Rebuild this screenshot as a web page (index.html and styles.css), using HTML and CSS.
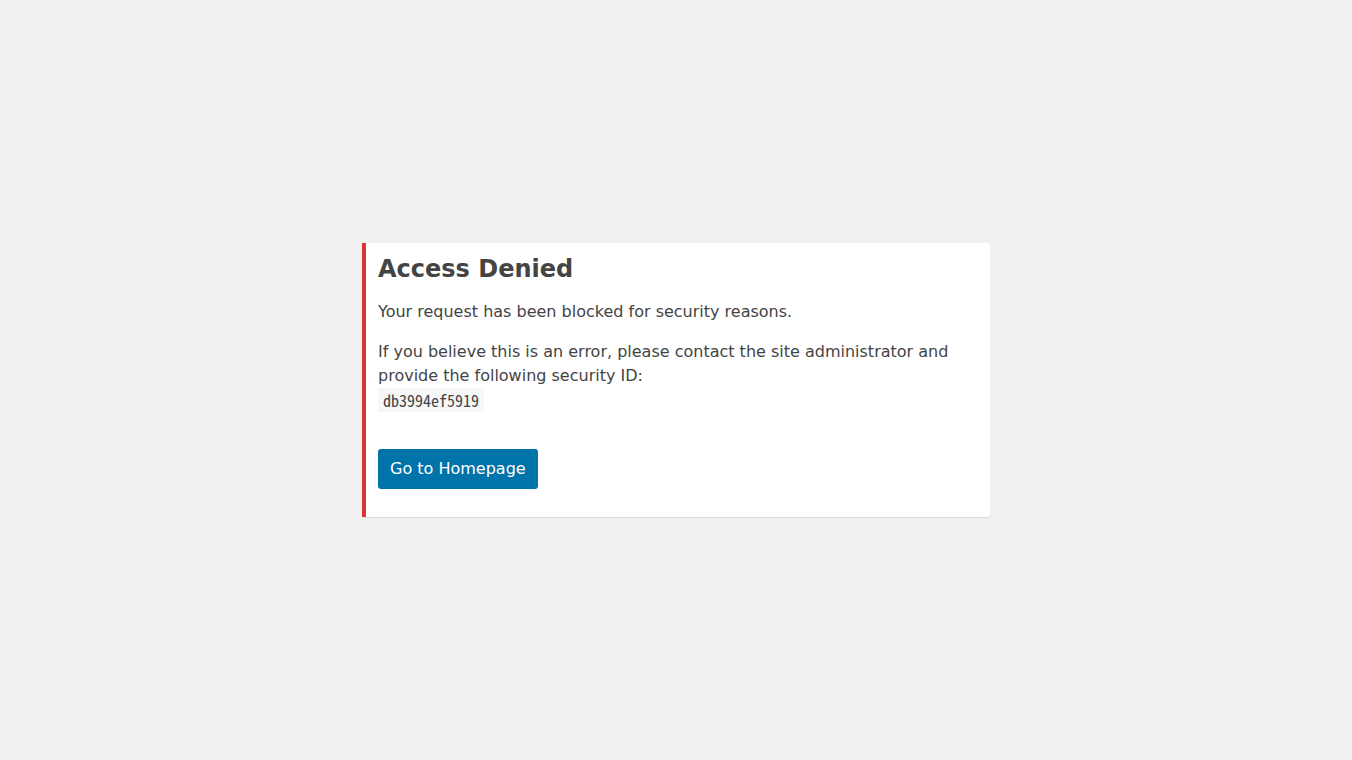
FILE: index.html
```html
<!DOCTYPE html>
<html lang="en">
<head>
<meta charset="utf-8">
<title>Access Denied</title>
<link rel="stylesheet" href="styles.css">
</head>
<body>
<main class="page">
  <section class="notice">
    <h1 class="notice-title">Access Denied</h1>
    <p class="notice-text">Your request has been blocked for security reasons.</p>
    <p class="notice-text">If you believe this is an error, please contact the site administrator and provide the following security ID:<br><code class="security-id">db3994ef5919</code></p>
    <div class="actions">
      <a class="button" href="#">Go to Homepage</a>
    </div>
  </section>
</main>
</body>
</html>
```

FILE: styles.css
```css
html, body {
  margin: 0;
  padding: 0;
}
body {
  background: #f1f1f1;
  color: #444;
  font-family: "DejaVu Sans", sans-serif;
  font-size: 16px;
  line-height: 24px;
}
.page {
  min-height: 100vh;
  display: flex;
  align-items: center;
  justify-content: center;
}
.notice {
  width: 600px;
  background: #fff;
  border-left: 4px solid #d63638;
  border-radius: 0 3px 3px 0;
  box-shadow: 0 1px 1px rgba(0, 0, 0, 0.1);
  padding: 11px 12px 28px;
}
.notice-title {
  margin: 0 0 15px;
  font-size: 24px;
  line-height: 31px;
  font-weight: bold;
  color: #444;
}
.notice-text {
  margin: 0 0 16px;
}
.security-id {
  display: inline-block;
  vertical-align: top;
  font-family: "Noto Sans Mono CJK JP", "DejaVu Sans Mono", monospace;
  font-size: 16px;
  line-height: 24px;
  background: #f6f7f7;
  padding: 0 5px;
}
.actions {
  margin-top: 37px;
  display: flex;
}
.button {
  display: inline-block;
  background: #0073aa;
  color: #fff;
  text-decoration: none;
  padding: 8px 12px;
  border-radius: 3px;
  line-height: 24px;
}
```
